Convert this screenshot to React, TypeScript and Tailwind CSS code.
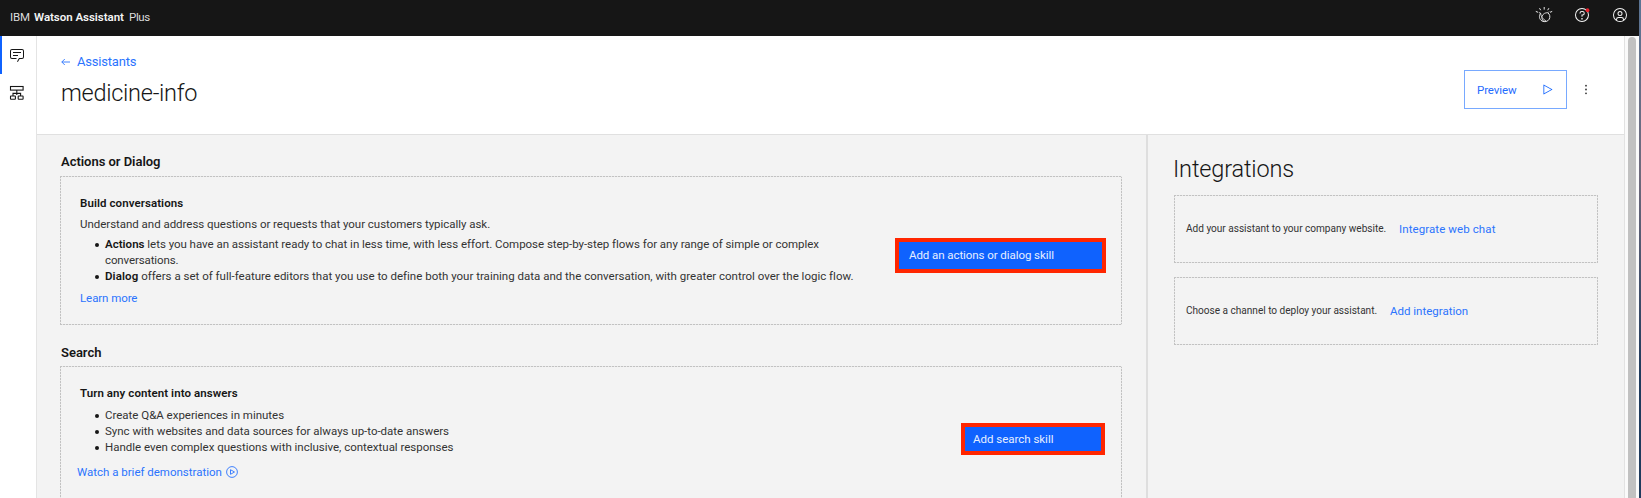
import type { ReactNode } from "react";

const dashed =
  "bg-no-repeat [background-image:repeating-linear-gradient(90deg,#c2c2c2_0_2px,#e8e8e8_2px_3px),repeating-linear-gradient(90deg,#c2c2c2_0_2px,#e8e8e8_2px_3px),repeating-linear-gradient(180deg,#c2c2c2_0_2px,#e8e8e8_2px_3px),repeating-linear-gradient(180deg,#c2c2c2_0_2px,#e8e8e8_2px_3px)] [background-size:100%_1px,100%_1px,1px_100%,1px_100%] [background-position:top,bottom,left,right]";

function WatsonIcon() {
  return (
    <svg width="18" height="18" viewBox="0 0 18 18" fill="none" stroke="#e8e8e8" strokeWidth="1">
      <path d="M5.600 7.200C3.600 10 4.300 13.400 7 15c2.600 1.400 5.800.6 7.200-1.800 1.300-2.400.6-5-1.400-6.400" />
      <path d="M5.600 7.200c.2 2.800 2.400 6.400 5.400 7.800M12.800 6.800c-2.400-.4-5 1-5.800 3.600-.5 1.900.2 3.500 1.600 4.600M5.600 7.200l-1.800-.7M12.800 6.800l1.300-1.300" strokeWidth=".85" />
      <path d="M9.200 1v2.600M4.500 2.200l1.200 2M13.900 2.200l-1.200 2M.8 5.400l2.200.9M17.200 5.400l-2.200.9" />
    </svg>
  );
}

function HelpIcon() {
  return (
    <svg width="16" height="16" viewBox="0 0 32 32" fill="#f4f4f4">
      <path d="M16 2a14 14 0 1 0 14 14A14 14 0 0 0 16 2Zm0 26a12 12 0 1 1 12-12 12 12 0 0 1-12 12Z" />
      <circle cx="16" cy="23.500" r="1.700" />
      <path d="M17 8h-1.500a4.490 4.490 0 0 0-4.500 4.500v.500h2v-.500a2.500 2.500 0 0 1 2.500-2.500H17a2.500 2.500 0 0 1 0 5h-2v4.500h2V17a4.500 4.500 0 0 0 0-9Z" />
      <circle cx="27" cy="6.500" r="3.800" fill="#e8202c" />
    </svg>
  );
}

function UserIcon() {
  return (
    <svg width="16" height="16" viewBox="0 0 32 32" fill="#f4f4f4">
      <path d="M16 8a5 5 0 1 0 5 5 5 5 0 0 0-5-5Zm0 8a3 3 0 1 1 3-3 3 3 0 0 1-3 3Z" />
      <path d="M16 2a14 14 0 1 0 14 14A14 14 0 0 0 16 2Zm-6 24.380V25a3 3 0 0 1 3-3h6a3 3 0 0 1 3 3v1.380a11.900 11.900 0 0 1-12 0Zm14-1.450A5 5 0 0 0 19 20h-6a5 5 0 0 0-5 4.930 12 12 0 1 1 16 0Z" />
    </svg>
  );
}

function ChatIcon() {
  return (
    <svg width="16" height="16" viewBox="0 0 32 32" fill="#161616">
      <path d="M17.740 30 16 29l4-7h6a2 2 0 0 0 2-2V8a2 2 0 0 0-2-2H6a2 2 0 0 0-2 2v12a2 2 0 0 0 2 2h9v2H6a4 4 0 0 1-4-4V8a4 4 0 0 1 4-4h20a4 4 0 0 1 4 4v12a4 4 0 0 1-4 4h-4.840Z" />
      <path d="M8 10h16v2H8zM8 16h10v2H8z" />
    </svg>
  );
}

function SkillsIcon() {
  return (
    <svg width="16" height="16" viewBox="0 0 16 16" fill="none" stroke="#161616" strokeWidth="1.1">
      <rect x="1.500" y="1.500" width="12.600" height="3.600" />
      <path d="M7.800 5.100v5M7.800 7.600M4 11v-2.600h7.600V11" />
      <rect x="1.500" y="11" width="4.900" height="3.200" rx=".4" />
      <rect x="9.200" y="11" width="4.900" height="3.200" rx=".4" />
    </svg>
  );
}

function Bullet({ children }: { children: ReactNode }) {
  return (
    <li className="flex">
      <span className="mr-[6px] mt-[7px] size-[4px] shrink-0 rounded-full bg-[#161616]" />
      <div>{children}</div>
    </li>
  );
}

export default function App() {
  return (
    <div className="flex h-[498px] w-[1641px] overflow-hidden bg-white font-['Roboto',sans-serif] text-[11.5px] leading-[16px] text-[#333]">
      <div className="flex w-[1639px] flex-col">
        <header className="flex h-[36px] shrink-0 items-center justify-between bg-[#161616] pl-[10px] pr-[11px] text-[#dcdcdc]">
          <div className="flex pb-[2px]">
            <span className="w-[24px] tracking-[-0.15px]">IBM</span>
            <span className="w-[95px] whitespace-nowrap font-semibold tracking-[-0.03px] text-[#f4f4f4]">Watson Assistant</span>
            <span className="tracking-[-0.35px]">Plus</span>
          </div>
          <div className="flex items-center pb-[6px]">
            <WatsonIcon />
            <span className="ml-[21px]"><HelpIcon /></span>
            <span className="ml-[22px]"><UserIcon /></span>
          </div>
        </header>

        <div className="flex min-h-0 flex-1">
          <nav className="flex w-[37px] shrink-0 flex-col border-r border-[#e4e4e4] bg-white">
            <div className="h-[38px] border-l-2 border-[#0f62fe] pl-[7px] pt-[11px]"><ChatIcon /></div>
            <div className="pl-[9px] pt-[11px]"><SkillsIcon /></div>
          </nav>

          <main className="flex w-[1588px] shrink-0 flex-col border-r border-[#e2e2e2]">
            <div className="flex h-[99px] shrink-0 justify-between border-b border-[#e0e0e0] bg-white pl-[24px] pr-[37px]">
              <div className="pt-[16px]">
                <a className="flex items-center text-[13px] leading-[20px] tracking-[-0.2px] text-[#2b74fe]">
                  <svg width="9" height="8" viewBox="0 0 9 8" fill="none" stroke="#2b74fe" strokeWidth=".9">
                    <path d="M9 4H.8M3.800 1l-3 3 3 3" />
                  </svg>
                  <span className="ml-[7px]">Assistants</span>
                </a>
                <h1 className="mt-[5px] text-[23.5px] font-light leading-[32px] tracking-[-0.27px] text-[#161616]">medicine-info</h1>
              </div>
              <div className="flex items-start pt-[34px]">
                <button className="flex h-[39px] w-[103px] items-center justify-between border border-[#78a9ff] pl-[12px] pr-[12px] text-[#1f6bfe]">
                  <span className="tracking-[-0.1px]">Preview</span>
                  <svg width="13" height="13" viewBox="0 0 32 32" fill="#0f62fe">
                    <path d="M7 28a1 1 0 0 1-1-1V5a1 1 0 0 1 1.480-.880l20 11a1 1 0 0 1 0 1.760l-20 11A1 1 0 0 1 7 28ZM8 6.690v18.620L24.930 16Z" />
                  </svg>
                </button>
                <svg className="ml-[18px] mt-[14px]" width="2" height="11" viewBox="0 0 2 11" fill="#333">
                  <circle cx="1" cy="1.700" r=".9" />
                  <circle cx="1" cy="5.500" r=".9" />
                  <circle cx="1" cy="9.300" r=".9" />
                </svg>
              </div>
            </div>

            <div className="flex min-h-0 flex-1 bg-[#f3f3f3]">
              <section className="w-[1111px] shrink-0 border-r-2 border-[#dedede] pl-[23px] pt-[17px]">
                <h2 className="pl-[1px] text-[13px] font-semibold leading-[20px] tracking-[-0.03px] text-[#161616]">Actions or Dialog</h2>
                <div className={`mt-[4px] flex h-[149px] w-[1062px] justify-between pl-[20px] pr-[16px] pt-[19px] ${dashed}`}>
                  <div className="whitespace-nowrap">
                    <h3 className="font-semibold tracking-[0.08px] text-[#161616]">Build conversations</h3>
                    <p className="mt-[5px] tracking-[-0.03px]">Understand and address questions or requests that your customers typically ask.</p>
                    <ul className="mt-[4px] pl-[15px]">
                      <Bullet>
                        <b className="font-semibold tracking-[0.02px] text-[#161616]">Actions</b>
                        <span className="tracking-[-0.03px]"> lets you have an assistant ready to chat in less time, with less effort. Compose step-by-step flows for any range of simple or complex</span>
                        <br />
                        <span className="tracking-[-0.12px]">conversations.</span>
                      </Bullet>
                      <Bullet>
                        <b className="font-semibold tracking-[0.1px] text-[#161616]">Dialog</b>
                        <span className="tracking-[0.003px]"> offers a set of full-feature editors that you use to define both your training data and the conversation, with greater control over the logic flow.</span>
                      </Bullet>
                    </ul>
                    <a className="mt-[6px] block tracking-[-0.08px] text-[#2b74fe]">Learn more</a>
                  </div>
                  <button className="mt-[43px] h-[35px] w-[211px] border-4 border-[#ff2600] bg-[#0f62fe] pb-[1px] pl-[10px] text-left tracking-[-0.07px] text-[#e6efff]">Add an actions or dialog skill</button>
                </div>

                <h2 className="mt-[18px] pl-[1px] text-[13px] font-semibold leading-[20px] tracking-[-0.02px] text-[#161616]">Search</h2>
                <div className={`mt-[3px] flex h-[149px] w-[1062px] justify-between pl-[20px] pr-[17px] pt-[19px] ${dashed}`}>
                  <div className="whitespace-nowrap">
                    <h3 className="font-semibold tracking-[0.08px] text-[#161616]">Turn any content into answers</h3>
                    <ul className="mt-[6px] pl-[15px] tracking-[-0.013px]">
                      <Bullet>Create Q&amp;A experiences in minutes</Bullet>
                      <Bullet>Sync with websites and data sources for always up-to-date answers</Bullet>
                      <Bullet>Handle even complex questions with inclusive, contextual responses</Bullet>
                    </ul>
                    <a className="-ml-[3px] mt-[9px] flex items-center tracking-[-0.01px] text-[#2b74fe]">
                      Watch a brief demonstration
                      <svg className="ml-[4px]" width="12" height="12" viewBox="0 0 12 12" fill="none" stroke="#2b74fe" strokeWidth=".9">
                        <circle cx="6" cy="6" r="5.400" />
                        <path d="M4.500 3.700v4.600L8.500 6Z" strokeLinejoin="round" />
                      </svg>
                    </a>
                  </div>
                  <button className="mt-[38px] h-[32px] w-[144px] border-4 border-[#ff2600] bg-[#0f62fe] pl-[8px] text-left tracking-[-0.02px] text-[#e6efff]">Add search skill</button>
                </div>
              </section>

              <aside className="flex-1 pl-[26px] pt-[18px]">
                <h2 className="-ml-px text-[23.5px] font-light leading-[32px] tracking-[-0.15px] text-[#161616]">Integrations</h2>
                <div className={`mt-[10px] flex h-[68px] w-[424px] items-center pl-[12px] ${dashed}`}>
                  <span className="w-[213px] whitespace-nowrap text-[10.1px] tracking-[-0.02px]">Add your assistant to your company website.</span>
                  <a className="tracking-[0.09px] text-[#2b74fe]">Integrate web chat</a>
                </div>
                <div className={`mt-[14px] flex h-[68px] w-[424px] items-center pl-[12px] ${dashed}`}>
                  <span className="w-[204px] whitespace-nowrap text-[10.1px] tracking-[-0.02px]">Choose a channel to deploy your assistant.</span>
                  <a className="text-[#2b74fe]">Add integration</a>
                </div>
              </aside>
            </div>
          </main>

          <div className="flex flex-1 justify-center bg-[#fafafa] pt-[1px]">
            <div className="h-[480px] w-[8px] rounded-t-full bg-[#c1c1c1]" />
          </div>
        </div>
      </div>
      <div className="flex-1 bg-linear-to-b from-[#5a7494] from-0% via-[#6f6a7c] via-35% to-[#1f3a5c] to-75%" />
    </div>
  );
}
